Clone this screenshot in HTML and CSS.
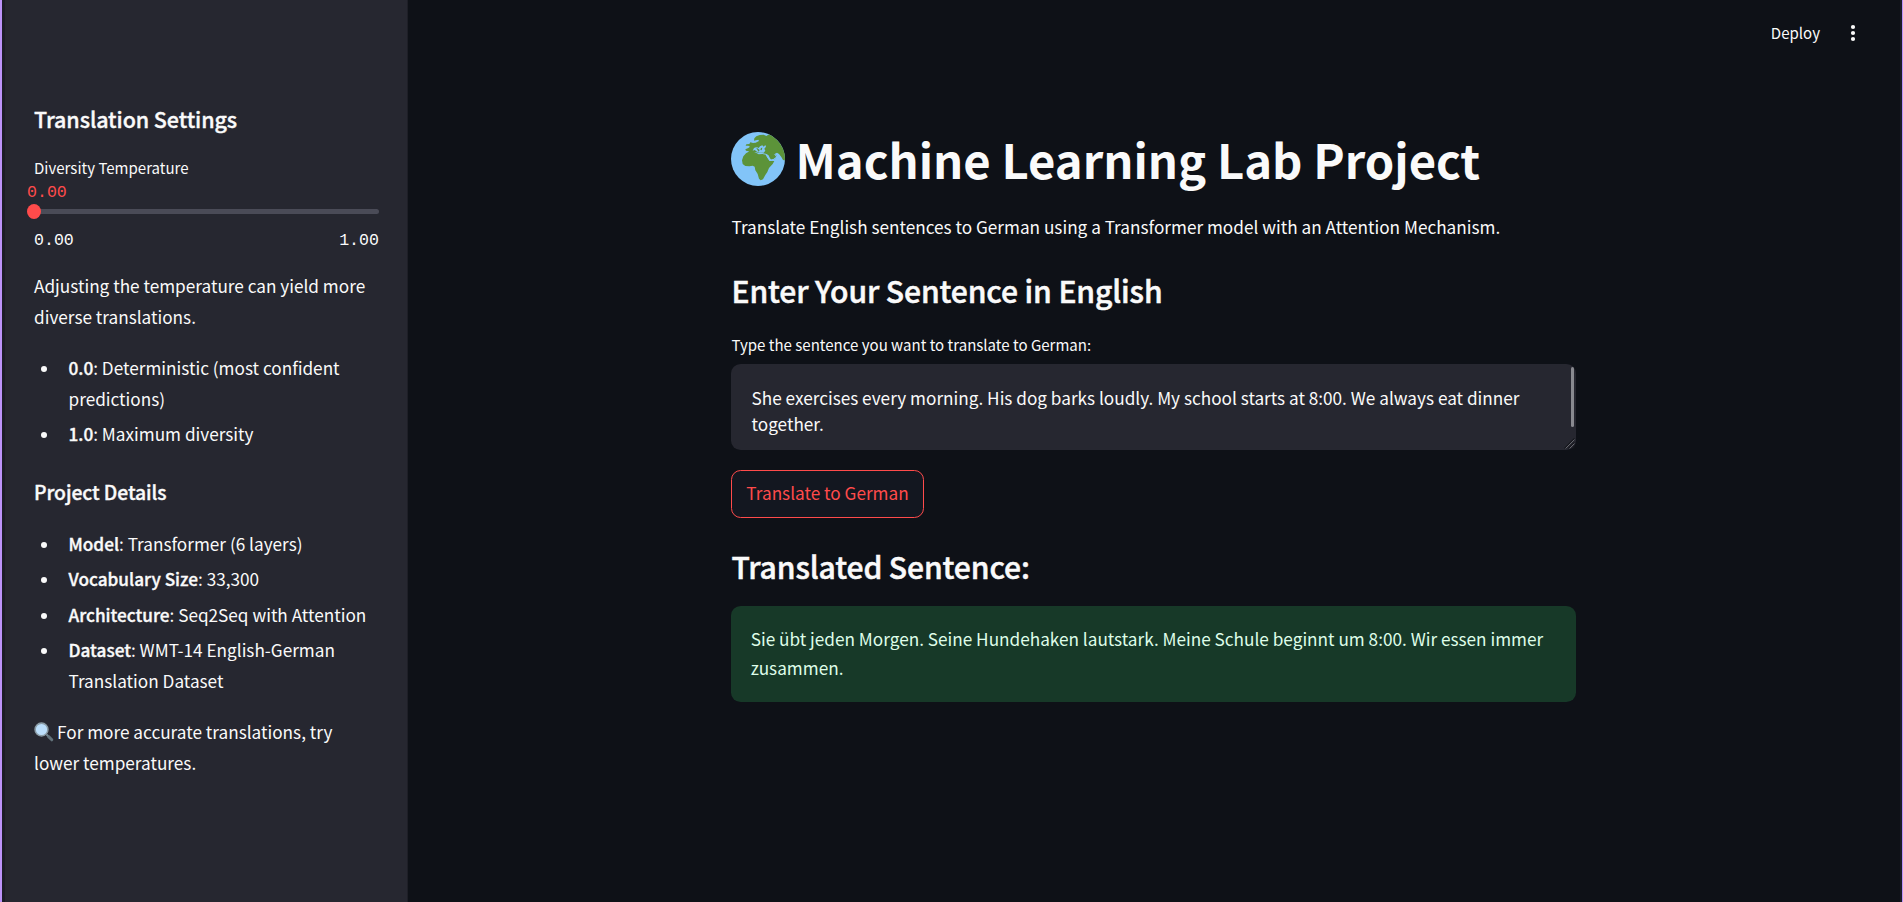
FILE: index.html
```html
<!DOCTYPE html>
<html lang="en">
<head>
<meta charset="utf-8">
<title>Machine Learning Lab Project</title>
<link rel="stylesheet" href="styles.css">
</head>
<body>
<div class="app">
  <aside class="sidebar">
    <h3 class="side-title">Translation Settings</h3>
    <div class="side-label">Diversity Temperature</div>
    <div class="slider-value">0.00</div>
    <div class="track"><span class="thumb"></span></div>
    <div class="ticks"><span>0.00</span><span>1.00</span></div>
    <p class="side-text">Adjusting the temperature can yield more diverse translations.</p>
    <ul class="list">
      <li><strong>0.0</strong>: Deterministic (most confident predictions)</li>
      <li><strong>1.0</strong>: Maximum diversity</li>
    </ul>
    <h4 class="side-subtitle">Project Details</h4>
    <ul class="list">
      <li><strong>Model</strong>: Transformer (6 layers)</li>
      <li><strong>Vocabulary Size</strong>: 33,300</li>
      <li><strong>Architecture</strong>: Seq2Seq with Attention</li>
      <li><strong>Dataset</strong>: WMT-14 English-German Translation Dataset</li>
    </ul>
    <p class="side-text hint"><svg class="lens" viewBox="0 0 20 20"><path d="M12.5 12.5l2 2" stroke="#78909c" stroke-width="1.8"/><path d="M14.6 14.6l3.2 3.2" stroke="#62727b" stroke-width="3" stroke-linecap="round"/><circle cx="7.5" cy="7.5" r="6.4" fill="#bbdefb" stroke="#8a9ba5" stroke-width="1.6"/></svg>For more accurate translations, try lower temperatures.</p>
  </aside>
  <main class="main">
    <header class="toolbar">
      <span>Deploy</span>
      <svg class="menu" viewBox="0 0 6 18"><circle cx="3" cy="3" r="2.1"/><circle cx="3" cy="9" r="2.1"/><circle cx="3" cy="15" r="2.1"/></svg>
    </header>
    <div class="content">
      <h1 class="title">
        <svg class="globe" viewBox="33 35 162 162">
          <defs><clipPath id="disc"><circle cx="114" cy="116" r="81"/></clipPath></defs>
          <g clip-path="url(#disc)">
            <rect x="33" y="35" width="162" height="162" fill="#82c4f8"/>
            <path fill="#5c9339" d="M102 61L103 54L109 48L119 44L131 43L139 47L150 40L165 42L186 60L198 88L196 121L189 119L184 110L177 101L171 97L165 100L171 107L170 112L162 118L155 120L150 114L145 104L137 100L126 98L116 97L105 95L96 95L88 97L86 93L78 91L76 87L85 83L90 79L85 76L77 76L79 72L88 71L91 66L99 68L107 67L117 62L115 58L108 60Z"/>
            <path fill="#5c9339" d="M86 94L99 94L105 96L116 102L127 101L138 103L142 112L149 122L163 122L158 131L147 143L142 155L136 164L129 177L122 180L117 175L113 161L106 150L104 139L98 136L88 138L76 137L68 131L66 120L70 108L78 99Z"/>
            <path fill="#82c4f8" d="M98 91L102 83L110 80L116 83L120 78L127 75L131 79L136 74L138 79L133 85L136 91L131 97L119 97L111 94L104 89Z"/>
            <path fill="#5c9339" d="M108 81L119 89L116 94L111 87ZM123 83L127 82L125 90L121 88Z"/>
            <path fill="none" stroke="#82c4f8" stroke-width="3.5" stroke-linejoin="round" d="M138 102L144 111L150 120L162 117L171 110L164 101"/>
          </g>
        </svg>
        <span>Machine Learning Lab Project</span>
      </h1>
      <p class="intro">Translate English sentences to German using a Transformer model with an Attention Mechanism.</p>
      <h2 class="heading">Enter Your Sentence in English</h2>
      <div class="field-label">Type the sentence you want to translate to German:</div>
      <div class="textarea">She exercises every morning. His dog barks loudly. My school starts at 8:00. We always eat dinner together.<span class="scrollbar"></span><svg class="grip" viewBox="0 0 11 11"><path d="M.5 10.5l10-10M4.5 10.5l6-6M8.5 10.5l2-2" stroke="#15161c" stroke-width="1.4"/><path d="M1.5 10.5l9-9M5.5 10.5l5-5" stroke="#77787f" stroke-width=".8"/></svg></div>
      <button class="button">Translate to German</button>
      <h2 class="heading result-heading">Translated Sentence:</h2>
      <div class="success">Sie übt jeden Morgen. Seine Hundehaken lautstark. Meine Schule beginnt um 8:00. Wir essen immer zusammen.</div>
    </div>
  </main>
</div>
</body>
</html>
```
FILE: styles.css
```css
* { box-sizing: border-box; }
body {
  margin: 0;
  background: #0e1117;
  color: #fafafa;
  font: 400 17.19px/30.72px "Noto Sans CJK SC", "Noto Sans", sans-serif;
  overflow: hidden;
}
h1, h2, h3, h4, p, ul { margin: 0; padding: 0; }
.app {
  display: flex;
  height: 902px;
  border-left: 2px solid #bd93f9;
  border-right: 1px solid #bd93f9;
}
.sidebar {
  width: 406px;
  padding: 104px 28px 0 29px;
  border-left: 3px solid #1c1d26;
  border-right: 1px solid #1e1f27;
  background: #262730;
}
.side-title, .side-subtitle, .heading, strong {
  font-weight: 500;
  -webkit-text-stroke: .35px currentColor;
}
.side-title { font-size: 21.49px; line-height: 29px; letter-spacing: -.08px; }
.side-label { margin-top: 23px; font-size: 15.04px; line-height: 24px; }
.slider-value {
  margin: 3px 0 0 -7px;
  color: #ff4b4b;
  font: 16.6px/20px "Liberation Mono", monospace;
}
.track {
  position: relative;
  height: 5px;
  margin-top: 6px;
  border-radius: 3px;
  background: #4a4b57;
}
.thumb {
  position: absolute;
  left: -7px;
  top: -5px;
  width: 14px;
  height: 15px;
  border-radius: 50%;
  background: #ff4b4b;
}
.ticks {
  display: flex;
  justify-content: space-between;
  margin-top: 17px;
  font: 16.6px/20px "Liberation Mono", monospace;
}
.side-text { margin-top: 20px; }
.list { margin-top: 21px; list-style: none; }
.list li { position: relative; padding-left: 34.5px; margin-bottom: 4.6px; }
.list li::before {
  content: "";
  position: absolute;
  left: 7px;
  top: 13px;
  width: 6px;
  height: 6px;
  border-radius: 50%;
  background: #fafafa;
}
.side-subtitle {
  margin-top: 29px;
  font-size: 19.34px;
  line-height: 26px;
  letter-spacing: -.07px;
}
.side-subtitle + .list { margin-top: 23.7px; }
.hint { margin-top: 19.3px; line-height: 31px; }
.lens { width: 20px; height: 20px; margin-right: 3px; vertical-align: -3.5px; }
.main { position: relative; flex: 1; border-right: 2px solid #1c1d26; }
.toolbar {
  position: absolute;
  top: 21px;
  right: 44px;
  display: flex;
  align-items: center;
  gap: 30px;
  font-size: 15.04px;
  line-height: 24px;
}
.menu { width: 6px; height: 18px; fill: #fafafa; }
.content { width: 845px; margin: 0 0 0 323px; padding-top: 127px; }
.title {
  display: flex;
  align-items: flex-start;
  gap: 10.5px;
  font-size: 47.2px;
  font-weight: 700;
  line-height: 63px;
  white-space: nowrap;
}
.globe { width: 54px; height: 54px; margin-top: 5px; }
.intro { margin-top: 22px; padding-left: .5px; }
.heading { margin-top: 27px; padding-left: .5px; font-size: 30.09px; line-height: 40px; letter-spacing: -.12px; -webkit-text-stroke-width: .5px; }
.field-label { margin-top: 23.5px; padding-left: .5px; font-size: 15.04px; line-height: 24px; }
.textarea {
  position: relative;
  height: 86px;
  margin-top: 6.8px;
  padding: 20.5px 24px 0 20.5px;
  border-radius: 9.6px;
  background: #262730;
  line-height: 26px;
}
.scrollbar {
  position: absolute;
  top: 3px;
  right: 2px;
  width: 3px;
  height: 60px;
  border-radius: 2px;
  background: #898a90;
}
.grip { position: absolute; right: 1px; bottom: 1px; width: 11px; height: 11px; }
.button {
  display: block;
  width: 193px;
  height: 48px;
  margin-top: 20px;
  padding: 0 0 1px;
  border: 1px solid #ff4b4b;
  border-radius: 9.6px;
  background: #131720;
  color: #ff4b4b;
  font: inherit;
}
.result-heading { margin-top: 27.5px; }
.success {
  height: 96px;
  margin-top: 20.2px;
  padding: 18px 19px 0 19.7px;
  border-radius: 9.6px;
  background: #173928;
  color: #dffde9;
  line-height: 29px;
}
```
